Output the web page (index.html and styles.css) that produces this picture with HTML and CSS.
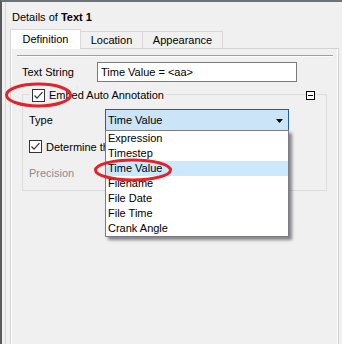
FILE: index.html
```html
<!DOCTYPE html>
<html>
<head>
<meta charset="utf-8">
<link rel="stylesheet" href="styles.css">
</head>
<body>
<div class="frame">
  <div class="inner">
    <div class="title">Details of <b>Text 1</b></div>
    <div class="tabs">
      <div class="tab active">Definition</div>
      <div class="tab t-loc">Location</div>
      <div class="tab t-app">Appearance</div>
    </div>
    <div class="panel">
      <div class="rule"></div>
      <div class="text-row">
        <span class="lbl">Text String</span>
        <div class="input">Time Value = &lt;aa&gt;</div>
      </div>
      <div class="group">
        <div class="legend">
          <div class="legend-main">
            <span class="check"><svg width="11" height="11" viewBox="0 0 11 11"><polyline points="1.5,5.5 4,8.2 9.5,2.2" fill="none" stroke="#333" stroke-width="1.2"/></svg></span>
            <span>Embed Auto Annotation</span>
          </div>
          <span class="collapse"><span class="minus"></span></span>
        </div>
        <div class="type-row">
          <span class="lbl2">Type</span>
          <div class="combo-wrap">
            <div class="combo">
              <span>Time Value</span>
              <svg class="arrow" width="7" height="4" viewBox="0 0 7 4"><polygon points="0,0 7,0 3.5,4" fill="#000"/></svg>
            </div>
            <ul class="list">
              <li>Expression</li>
              <li>Timestep</li>
              <li class="sel">Time Value</li>
              <li>Filename</li>
              <li>File Date</li>
              <li>File Time</li>
              <li>Crank Angle</li>
            </ul>
          </div>
        </div>
        <div class="check-row">
          <span class="check"><svg width="11" height="11" viewBox="0 0 11 11"><polyline points="1.5,5.5 4,8.2 9.5,2.2" fill="none" stroke="#333" stroke-width="1.2"/></svg></span>
          <span class="clip">Determine the Precision</span>
        </div>
        <div class="prec">Precision</div>
      </div>
    </div>
  </div>
</div>
<svg class="marks" width="342" height="344" viewBox="0 0 342 344">
  <ellipse cx="38.5" cy="95" rx="32" ry="11" fill="none" stroke="#e3222a" stroke-width="3"/>
  <ellipse cx="133" cy="170" rx="37.5" ry="10" fill="none" stroke="#e3222a" stroke-width="3"/>
</svg>
</body>
</html>
```

FILE: styles.css
```css
* { box-sizing: border-box; }
html, body { margin: 0; padding: 0; }
body {
  position: relative;
  width: 342px;
  height: 344px;
  overflow: hidden;
  background: #f0f0f0;
  font-family: "Liberation Sans", Arial, sans-serif;
  font-size: 11px;
  color: #000;
}
.frame {
  height: 344px;
  border-top: 2px solid #6e737a;
  border-left: 2px solid #5b5b5b;
}
.inner {
  height: 342px;
  margin-left: 3px;
  border-left: 1px solid #d6d6d6;
  padding-left: 4px;
  display: flex;
  flex-direction: column;
}
.title {
  padding-top: 8px;
  padding-left: 2px;
  line-height: 14px;
  height: 22px;
}
.title b { font-weight: bold; }
.tabs {
  margin-top: 5px;
  height: 19px;
  display: flex;
  align-items: flex-end;
}
.tab {
  height: 17px;
  border: 1px solid #d9d9d9;
  border-bottom: none;
  background: #f0f0f0;
  text-align: center;
  line-height: 14px;
  padding-top: 1px;
}
.tab.active {
  width: 71px;
  height: 20px;
  margin-bottom: -1px;
  background: #fff;
  position: relative;
  z-index: 2;
  padding-top: 2px;
}
.t-loc { width: 63px; margin-left: -1px; }
.t-app { width: 81px; margin-left: -1px; }
.panel {
  flex: 1;
  margin-right: 3px;
  border: 1px solid #d3d3d3;
  border-bottom: none;
  box-shadow: inset 1px 0 0 #fff, inset -1px 0 0 #fff;
  background: #f0f0f0;
}
.rule {
  margin: 6px 5px 0 6px;
  height: 2px;
  border-top: 1px solid #a0a0a0;
  border-bottom: 1px solid #fcfcfc;
}
.text-row {
  margin-top: 5px;
  height: 20px;
  padding-left: 11px;
  display: flex;
  align-items: center;
}
.lbl { width: 75px; }
.input {
  width: 200px;
  height: 20px;
  border: 1px solid #7a7a7a;
  background: #fff;
  padding-left: 3px;
  line-height: 18px;
}
.group {
  margin: 12px 11px 0 11px;
  border: 1px solid #dcdcdc;
  padding-bottom: 10px;
}
.legend {
  margin-top: -7px;
  height: 14px;
  display: flex;
  align-items: center;
}
.legend-main {
  margin-left: 7px;
  padding: 0 2px;
  background: #f0f0f0;
  display: flex;
  align-items: center;
  gap: 4px;
  height: 14px;
}
.check {
  width: 13px;
  height: 13px;
  border: 1px solid #333;
  background: #fff;
  display: flex;
  align-items: center;
  justify-content: center;
  flex: none;
}
.check svg { display: block; }
.collapse {
  margin-left: auto;
  margin-right: 11px;
  width: 9px;
  height: 9px;
  border: 1px solid #000;
  background: #fff;
  display: flex;
  align-items: center;
  justify-content: center;
}
.minus {
  width: 5px;
  height: 1px;
  background: #000;
}
.type-row {
  margin-top: 7px;
  height: 22px;
  padding-left: 6px;
  display: flex;
  align-items: center;
}
.lbl2 { width: 76px; }
.combo-wrap {
  position: relative;
  width: 184px;
  height: 22px;
}
.combo {
  height: 22px;
  border: 1px solid #1a5fa8;
  background: #cce4f7;
  padding: 0 5px 0 2px;
  display: flex;
  align-items: center;
  justify-content: space-between;
  line-height: 20px;
}
.arrow { display: block; margin-top: 1px; }
.list {
  position: absolute;
  top: 21px;
  left: 0;
  width: 184px;
  margin: 0;
  padding: 0;
  list-style: none;
  background: #fff;
  border: 1px solid #7c7c84;
  box-shadow: 3px 3px 3px rgba(0, 0, 0, 0.45);
  z-index: 5;
}
.list li {
  height: 15px;
  line-height: 15px;
  padding-left: 2px;
}
.list li.sel { background: #cce8ff; }
.check-row {
  margin-top: 9px;
  height: 13px;
  padding-left: 6px;
  display: flex;
  align-items: center;
  gap: 4px;
  white-space: nowrap;
}
.clip {
  width: 59px;
  overflow: hidden;
  white-space: nowrap;
  line-height: 14px;
}
.prec {
  margin-top: 13px;
  line-height: 14px;
  padding-left: 6px;
  color: #8c8c8c;
}
.marks {
  position: absolute;
  top: 0;
  left: 0;
  pointer-events: none;
  z-index: 10;
}
```
